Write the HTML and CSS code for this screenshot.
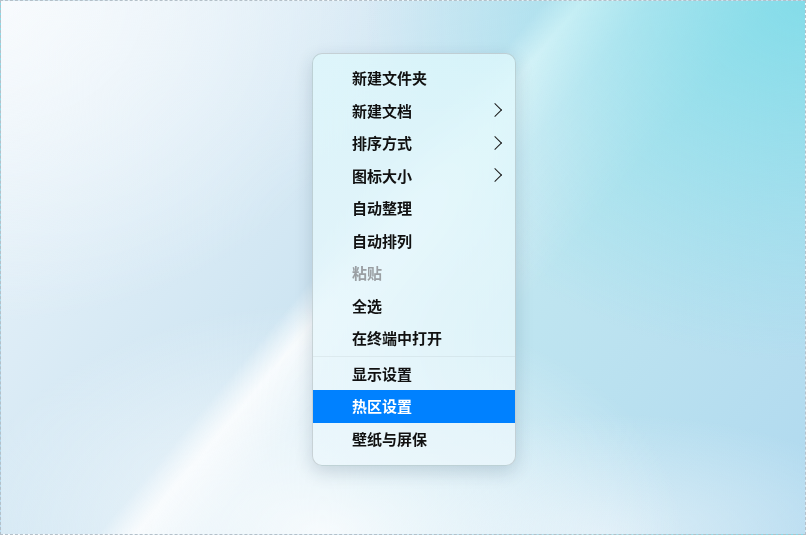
FILE: index.html
```html
<!DOCTYPE html>
<html lang="zh-CN">
<head>
    <meta charset="UTF-8">
    <title>桌面右键菜单</title>
    <link rel="stylesheet" href="styles.css">
</head>
<body>
    <div class="desktop">
        <ul class="menu">
            <li class="item">新建文件夹</li>
            <li class="item has-sub">新建文档</li>
            <li class="item has-sub">排序方式</li>
            <li class="item has-sub">图标大小</li>
            <li class="item">自动整理</li>
            <li class="item">自动排列</li>
            <li class="item disabled">粘贴</li>
            <li class="item">全选</li>
            <li class="item">在终端中打开</li>
            <li class="separator"></li>
            <li class="item">显示设置</li>
            <li class="item active">热区设置</li>
            <li class="item">壁纸与屏保</li>
        </ul>
    </div>
</body>
</html>
```

FILE: styles.css
```css
* {
    box-sizing: border-box;
}

body {
    margin: 0;
    font-family: "Noto Sans CJK SC", "Noto Sans", sans-serif;
}

/* wallpaper */
.desktop {
    width: 806px;
    height: 535px;
    border: 1px dashed #b4c0c9;
    padding: 52px 0 0 311px;
    background:
        radial-gradient(ellipse 440px 360px at 100% 0%, rgba(122, 219, 232, 0.85), rgba(122, 219, 232, 0) 100%),
        radial-gradient(ellipse 360px 230px at 40% 100%, rgba(250, 252, 254, 0.95), rgba(250, 252, 254, 0) 100%),
        radial-gradient(ellipse 300px 120px at 75% 100%, rgba(236, 244, 250, 0.7), rgba(236, 244, 250, 0) 100%),
        radial-gradient(ellipse 380px 320px at 0% 0%, rgba(250, 252, 254, 0.8), rgba(250, 252, 254, 0) 100%),
        linear-gradient(130deg, rgba(255, 255, 255, 0) 43.5%, rgba(255, 255, 255, 0.85) 46.5%, rgba(255, 255, 255, 0.35) 52%, rgba(255, 255, 255, 0) 62%),
        linear-gradient(130deg, #eef5fa 0%, #dcecf6 25%, #cee5f2 44%, #bfe5f0 62%, #b0d9ef 100%);
}

.menu {
    list-style: none;
    margin: 0;
    padding: 8px 0 10px;
    width: 204px;
    border: 1px solid rgba(0, 0, 0, 0.15);
    border-radius: 10px;
    background: linear-gradient(rgba(222, 248, 252, 0.75), rgba(236, 247, 252, 0.75));
    backdrop-filter: blur(24px);
    box-shadow: 0 6px 18px rgba(0, 40, 70, 0.16);
    overflow: hidden;
}

.item {
    display: flex;
    align-items: center;
    height: 32.5px;
    padding: 0 15px 1px 39px;
    font-size: 15px;
    font-weight: 600;
    color: #111;
}

/* submenu arrow */
.has-sub::after {
    content: "";
    margin-left: auto;
    width: 9px;
    height: 9px;
    border-top: 1.5px solid #1a1a1a;
    border-right: 1.5px solid #1a1a1a;
    transform: rotate(45deg);
}

.disabled {
    color: #9a9fa3;
}

.active {
    background: #0081ff;
    color: #fff;
}

.separator {
    height: 1px;
    margin: 1.5px 0 0.5px;
    background: rgba(0, 0, 0, 0.05);
}
```
